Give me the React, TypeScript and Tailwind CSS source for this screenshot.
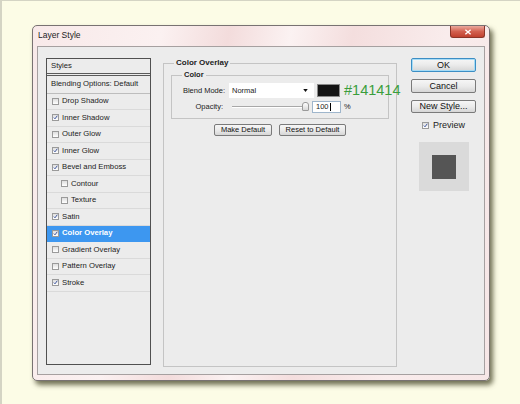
import React from "react";

const styles: { label: string; on?: boolean; indent?: boolean; active?: boolean }[] = [
  { label: "Drop Shadow" },
  { label: "Inner Shadow", on: true },
  { label: "Outer Glow" },
  { label: "Inner Glow", on: true },
  { label: "Bevel and Emboss", on: true },
  { label: "Contour", indent: true },
  { label: "Texture", indent: true },
  { label: "Satin", on: true },
  { label: "Color Overlay", on: true, active: true },
  { label: "Gradient Overlay" },
  { label: "Pattern Overlay" },
  { label: "Stroke", on: true },
];

function CheckBox({ on }: { on?: boolean }) {
  return (
    <span className="flex h-[7px] w-[7px] shrink-0 items-center justify-center border border-[#9a9a9a] bg-gradient-to-b from-[#dedede] to-white">
      {on && (
        <svg viewBox="0 0 8 8" className="h-[7px] w-[7px]">
          <path d="M1.3 4.1 L3.2 6.1 L6.8 1.2" fill="none" stroke="#2a4596" strokeWidth="1.4" />
        </svg>
      )}
    </span>
  );
}

function Btn({ children, def, className }: { children: React.ReactNode; def?: boolean; className?: string }) {
  return (
    <div
      className={
        "flex shrink-0 items-center justify-center rounded-[2px] border bg-gradient-to-b from-[#f6f6f6] via-[#ebebeb] to-[#d6d6d6] leading-none text-[#111] " +
        (def ? "border-[#3c8ec4] shadow-[inset_0_0_0_1px_#a6dcf6] " : "border-[#7a7a7a] ") +
        (className ?? "")
      }
    >
      {children}
    </div>
  );
}

export default function App() {
  return (
    <div
      className="h-[404px] w-[520px] overflow-hidden border-l-2 border-t border-[#d4d4c4] bg-[#fcfce6] pl-[30px] pt-[24px]"
      style={{ fontFamily: '"Liberation Sans", Arial, sans-serif' }}
    >
      <div className="flex h-[356px] w-[458px] flex-col rounded-[5px] border border-[#787272] bg-[linear-gradient(100deg,#f8e9e9_0%,#fbf1f1_25%,#f3dcdc_38%,#fbf2f2_50%,#f4dede_62%,#f9ecec_80%,#f6e6e6_100%)] shadow-[3px_4px_5px_rgba(70,70,40,0.75)]">
        {/* title bar */}
        <div className="flex h-[20px] shrink-0 items-start justify-between">
          <span className="pl-[5px] pt-[5px] text-[8.5px] leading-none text-[#222]">Layer Style</span>
          <div className="mr-[4px] flex h-[12px] w-[35px] items-center justify-center rounded-b-[3px] border border-t-0 border-[#8a3528] bg-gradient-to-b from-[#eaa99e] via-[#d2604f] to-[#c0402e]">
            <svg viewBox="0 0 10 8" className="h-[6px] w-[8px]">
              <path d="M1.5 1 L8.5 7 M8.5 1 L1.5 7" stroke="white" strokeWidth="1.8" />
            </svg>
          </div>
        </div>

        {/* client area */}
        <div className="mx-[4px] flex h-[329px] shrink-0 items-start border border-[#a6a0a0] bg-[#ececec] pl-[8px] pt-[11px]">
          {/* styles list */}
          <div className="flex h-[307px] w-[105px] shrink-0 flex-col border border-[#505050] bg-[#ececec] text-[7.7px] leading-none text-[#222]">
            <div className="flex h-[17px] items-center border-b-[3px] border-double border-[#5a5a5a] pl-[4px]">Styles</div>
            <div className="flex h-[17.5px] items-center border-b border-[#bdbdbd] pl-[4px]">Blending Options: Default</div>
            {styles.map((s) => (
              <div
                key={s.label}
                className={
                  "flex h-[16.5px] shrink-0 items-center gap-[3px] border-b " +
                  (s.indent ? "pl-[14px] " : "pl-[5px] ") +
                  (s.active ? "border-[#3d97f0] bg-[#3d97f0] font-bold text-white" : "border-[#dadada]")
                }
              >
                <CheckBox on={s.on} />
                <span>{s.label}</span>
              </div>
            ))}
          </div>

          {/* settings */}
          <fieldset className="ml-[12px] h-[309px] w-[234px] min-w-0 shrink-0 border border-[#c4c4c4] text-[7.5px] leading-none text-[#222]">
            <legend className="ml-[10px] px-[2px] text-[8px] leading-[10px] font-bold">Color Overlay</legend>
            <fieldset className="mx-[7px] mt-[2px] min-w-0 border border-[#c4c4c4] pb-[5px]">
              <legend className="ml-[10px] px-[2px] text-[7.5px] leading-[10px] font-bold">Color</legend>
              <div className="mt-[3px] flex w-[216px] items-center">
                <span className="w-[53px] shrink-0 text-right">Blend Mode:</span>
                <div className="ml-[4px] flex h-[15px] w-[85px] shrink-0 items-center justify-between bg-white pl-[3px] pr-[6px]">
                  <span>Normal</span>
                  <svg viewBox="0 0 6 4" className="h-[3px] w-[5px]">
                    <path d="M0 0 H6 L3 4 Z" fill="#111" />
                  </svg>
                </div>
                <div className="ml-[3px] h-[13px] w-[23px] shrink-0 border border-[#8a8a8a] bg-[#141414]" />
                <span className="ml-[4px] shrink-0 whitespace-nowrap text-[14.5px] leading-none text-[#3a9e3c]">#141414</span>
              </div>
              <div className="mt-[3px] flex items-center">
                <span className="w-[51px] shrink-0 text-right">Opacity:</span>
                <div className="relative ml-[9px] flex h-[12px] w-[74px] shrink-0 items-center">
                  <div className="h-[2px] w-full border-t border-[#a8a8a8] border-b border-b-white" />
                  <div className="absolute right-[-3px] top-[1px] h-[9px] w-[7px] rounded-t-[3px] rounded-b-[1px] border border-[#9a9a9a] bg-gradient-to-b from-white to-[#d8d8d8]" />
                </div>
                <div className="ml-[6px] flex h-[12px] w-[29px] shrink-0 items-center border border-[#9fb6cc] bg-white pl-[3px]">
                  <span>100</span>
                  <span className="ml-[1px] h-[8px] w-px bg-black" />
                </div>
                <span className="ml-[3px]">%</span>
              </div>
            </fieldset>
            <div className="mt-[5px] flex justify-center gap-[7px]">
              <Btn className="h-[12px] w-[58px]">Make Default</Btn>
              <Btn className="h-[12px] w-[67px]">Reset to Default</Btn>
            </div>
          </fieldset>

          {/* buttons */}
          <div className="ml-[14px] flex w-[65px] shrink-0 flex-col items-center text-[9px] leading-none">
            <Btn def className="h-[14px] w-[65px]">OK</Btn>
            <Btn className="mt-[7px] h-[14px] w-[65px]">Cancel</Btn>
            <Btn className="mt-[7px] h-[13px] w-[65px]">New Style...</Btn>
            <div className="mt-[8px] flex h-[9px] items-center gap-[4px] text-[#222]">
              <CheckBox on />
              <span>Preview</span>
            </div>
            <div className="mt-[12px] flex h-[49px] w-[50px] items-center justify-center bg-[#dadada]">
              <div className="h-[24px] w-[24px] bg-[#555555]" />
            </div>
          </div>
        </div>
      </div>
    </div>
  );
}
